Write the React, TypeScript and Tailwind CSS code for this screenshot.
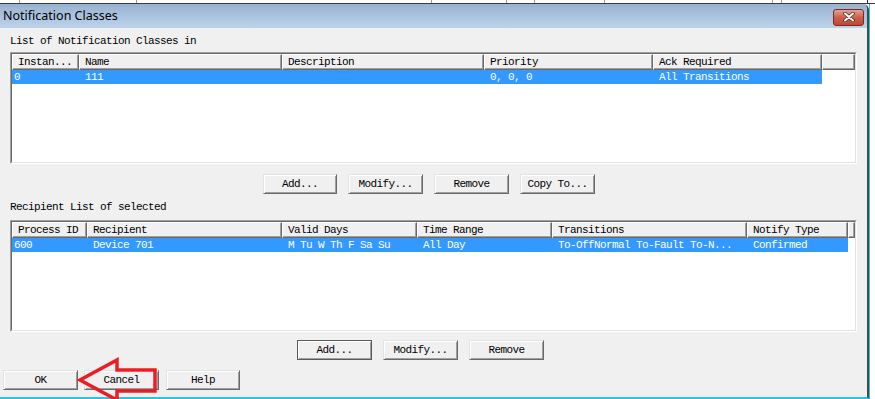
import React from "react";

const mono = "font-['Liberation_Mono',monospace] text-[11px] tracking-[-0.6px] text-black";

type Col = { label: string; w: string };

const cols1: Col[] = [
  { label: "Instan...", w: "w-[67px]" },
  { label: "Name", w: "w-[203px]" },
  { label: "Description", w: "w-[202px]" },
  { label: "Priority", w: "w-[169px]" },
  { label: "Ack Required", w: "w-[169px]" },
];
const row1 = ["0", "111", "", "0, 0, 0", "All Transitions"];

const cols2: Col[] = [
  { label: "Process ID", w: "w-[75px]" },
  { label: "Recipient", w: "w-[195px]" },
  { label: "Valid Days", w: "w-[135px]" },
  { label: "Time Range", w: "w-[135px]" },
  { label: "Transitions", w: "w-[195px]" },
  { label: "Notify Type", w: "w-[101px]" },
];
const row2 = ["600", "Device 701", "M Tu W Th F Sa Su", "All Day", "To-OffNormal To-Fault To-N...", "Confirmed"];

function HeaderCell({ label, w }: { label?: string; w: string }) {
  return (
    <div
      className={`${w} h-[16px] shrink-0 border border-t-white border-l-white border-r-[#696969] border-b-[#696969] shadow-[inset_-1px_-1px_0_#a0a0a0] bg-[#f0f0f0] pl-[5px] leading-[14px] overflow-hidden whitespace-nowrap`}
    >
      {label}
    </div>
  );
}

function ListBox({ cols, row }: { cols: Col[]; row: string[] }) {
  return (
    <div className="w-[847px] h-[112px] border border-t-[#a0a0a0] border-l-[#a0a0a0] border-r-white border-b-white">
      <div className={`h-full flex flex-col bg-white border border-t-[#696969] border-l-[#696969] border-r-[#e3e3e3] border-b-[#e3e3e3] ${mono}`}>
        <div className="flex">
          {cols.map((c) => (
            <HeaderCell key={c.label} label={c.label} w={c.w} />
          ))}
          <HeaderCell w="flex-1" />
        </div>
        <div className="flex">
          {cols.map((c, i) => (
            <div
              key={c.label}
              className={`${c.w} h-[14px] shrink-0 bg-[#3399ff] text-white leading-[14px] whitespace-nowrap overflow-hidden ${i === 0 ? "pl-[2px]" : "pl-[6px]"}`}
            >
              {row[i]}
            </div>
          ))}
        </div>
      </div>
    </div>
  );
}

function Btn({ label, w = "w-[74px]", def = false, extra = "" }: { label: string; w?: string; def?: boolean; extra?: string }) {
  return (
    <div
      className={`${w} ${extra} h-[20px] shrink-0 flex items-center justify-center bg-[#f0f0f0] ${
        def
          ? "border border-[#5a5a5a] shadow-[inset_1px_1px_0_#ffffff,inset_-1px_-1px_0_#a0a0a0]"
          : "border border-t-[#e3e3e3] border-l-[#e3e3e3] border-r-[#696969] border-b-[#696969] shadow-[inset_1px_1px_0_#ffffff,inset_-1px_-1px_0_#a0a0a0]"
      } ${mono}`}
    >
      {label}
    </div>
  );
}

export default function App() {
  return (
    <div className="w-[875px] h-[399px] relative overflow-hidden bg-white flex flex-col">
      {/* background window peeking above the dialog */}
      <div className="h-[4px] shrink-0 flex border-b border-[#3c3c3c]">
        <div className="w-[20px] border-r border-[#9a9a9a]" />
        <div className="w-[117px] border-r border-[#9a9a9a]" />
        <div className="w-[295px] border-r border-[#9a9a9a]" />
        <div className="w-[75px] border-r border-[#9a9a9a]" />
        <div className="w-[28px] border-r border-[#9a9a9a]" />
        <div className="w-[70px] border-r border-[#9a9a9a]" />
        <div className="w-[168px] border-r border-[#9a9a9a]" />
        <div className="w-[9px] border-r border-[#9a9a9a]" />
        <div className="w-[86px] border-r border-[#3c3c3c] bg-white" />
      </div>

      <div className="flex flex-1 min-h-0">
        <div className="w-[869px] shrink-0 flex flex-col bg-[#f0f0f0] border-r-2 border-[#4a4a4a] rounded-tr-[6px] border-b-2 border-b-[#2bc3e3]">
          {/* title bar */}
          <div className="h-[24px] shrink-0 flex items-center justify-between pl-[3px] pr-[3px] bg-gradient-to-b from-[#97b2d0] to-[#bdd3eb] rounded-tr-[5px]">
            <span className="font-['Noto_Sans',sans-serif] text-[12.5px] text-black leading-none">Notification Classes</span>
            <div className="w-[31px] h-[17px] mt-[2px] rounded-[3px] border border-[#7b2a22] bg-gradient-to-b from-[#e1a394] via-[#cc5e4c] to-[#c24634] flex items-center justify-center">
              <svg width="12" height="10" viewBox="0 0 12 10">
                <path d="M2 1.5 L10 8.5 M10 1.5 L2 8.5" stroke="#5a2a24" strokeWidth="3.6" strokeLinecap="round" />
                <path d="M2 1.5 L10 8.5 M10 1.5 L2 8.5" stroke="#ffffff" strokeWidth="2" strokeLinecap="round" />
              </svg>
            </div>
          </div>

          {/* body */}
          <div className="flex flex-col pl-[10px]">
            <div className={`mt-[6px] h-[14px] leading-[14px] ${mono}`}>List of Notification Classes in</div>
            <div className="mt-[4px]">
              <ListBox cols={cols1} row={row1} />
            </div>
            <div className="mt-[10px] ml-[253px] flex gap-[11px]">
              <Btn label="Add..." />
              <Btn label="Modify..." w="w-[75px]" />
              <Btn label="Remove" w="w-[75px]" />
              <Btn label="Copy To..." w="w-[75px]" />
            </div>
            <div className={`mt-[6px] h-[14px] leading-[14px] ${mono}`}>Recipient List of selected</div>
            <div className="mt-[6px]">
              <ListBox cols={cols2} row={row2} />
            </div>
            <div className="mt-[8px] ml-[287px] flex gap-[11px]">
              <Btn label="Add..." w="w-[75px]" def />
              <Btn label="Modify..." w="w-[75px]" />
              <Btn label="Remove" w="w-[75px]" />
            </div>
            <div className="mt-[10px] ml-[-7px] flex">
              <Btn label="OK" w="w-[75px]" />
              <Btn label="Cancel" w="w-[75px]" extra="ml-[6px]" />
              <Btn label="Help" extra="ml-[7px]" />
            </div>
          </div>
        </div>
        <div className="w-[1px] shrink-0 bg-[#2bc3e3]" />
        <div className="flex-1 bg-white" />
      </div>

      {/* red annotation arrow pointing at OK */}
      <svg className="absolute left-0 top-0 pointer-events-none" width="875" height="399" viewBox="0 0 875 399">
        <polygon
          points="80,380 117,360 117,370 155,370 155,391 117,391 117,400"
          fill="none"
          stroke="#ed1c24"
          strokeWidth="3.5"
          strokeLinejoin="miter"
        />
      </svg>
    </div>
  );
}
